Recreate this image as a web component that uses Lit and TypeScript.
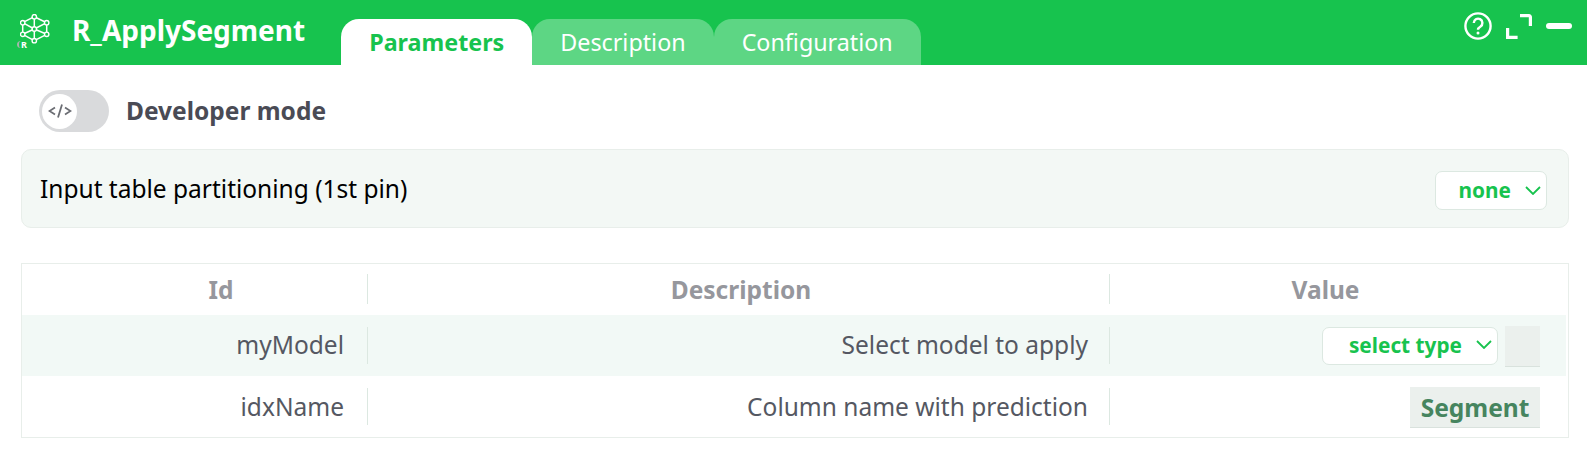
import { LitElement, html, css, svg } from 'lit';
import { customElement } from 'lit/decorators.js';

const chevron = html`<svg class="chev" viewBox="0 0 16 9" width="16" height="9"><path d="M1 1l7 7 7-7" fill="none" stroke="#17c34e" stroke-width="1.8"/></svg>`;

const logoNodes = [[14.3, 2.7], [2.7, 8.7], [26.7, 8.7], [14.3, 15], [2.7, 20.3], [26.7, 20.3], [14.3, 26.7]];
const logoEdges = [[0, 1], [0, 2], [1, 3], [2, 3], [1, 4], [2, 5], [4, 6], [5, 6], [0, 3], [3, 6], [3, 4], [3, 5]];

@customElement('app-root')
export class AppRoot extends LitElement {
  static styles = css`
    :host {
      display: block;
      font-family: 'Noto Sans', sans-serif;
      background: #fff;
      height: 461px;
      overflow: hidden;
    }
    .header {
      height: 65px;
      background: #17c34e;
      display: flex;
      align-items: flex-end;
      box-sizing: border-box;
    }
    .logo {
      position: relative;
      margin: 0 0 15px 17px;
      width: 33px;
      height: 36px;
      align-self: flex-end;
    }
    .logo svg {
      display: block;
      margin-left: 3px;
    }
    .logo .badge {
      position: absolute;
      left: 0;
      top: 27px;
      width: 8px;
      height: 7px;
      border-radius: 50%;
      border-left: 2px solid #a3b5a9;
      box-sizing: border-box;
    }
    .logo .r {
      position: absolute;
      left: 4px;
      top: 26px;
      font-size: 9px;
      font-weight: 700;
      line-height: 9px;
      color: #fff;
    }
    .title {
      margin: 0 36px 0 22px;
      align-self: flex-start;
      padding-top: 11px;
      font-size: 28px;
      line-height: 38px;
      font-weight: 700;
      color: #fff;
    }
    .tabs {
      display: flex;
      align-items: flex-end;
      height: 46px;
    }
    .tab {
      height: 46px;
      box-sizing: border-box;
      padding: 7px 28px 0;
      border-radius: 18px 18px 0 0;
      background: #5dd684;
      color: #fff;
      font-size: 23.3px;
      line-height: 32px;
    }
    .tab.active {
      background: #fff;
      color: #17c34e;
      font-weight: 700;
    }
    .actions {
      margin-left: auto;
      align-self: flex-start;
      display: flex;
      align-items: center;
      gap: 14px;
      padding: 12px 15px 0 0;
    }
    .actions svg {
      display: block;
    }
    .dev {
      display: flex;
      align-items: center;
      gap: 17px;
      margin: 25px 0 0 39px;
      height: 42px;
    }
    .switch {
      width: 70px;
      height: 42px;
      border-radius: 21px;
      background: #d9dadc;
      display: flex;
      align-items: center;
      padding-left: 3px;
      box-sizing: border-box;
    }
    .knob {
      width: 35px;
      height: 35px;
      border-radius: 50%;
      background: #fff;
      color: #6b6d73;
      display: flex;
      align-items: center;
      justify-content: center;
    }
    .dev-label {
      font-size: 24.5px;
      font-weight: 700;
      color: #4a4b55;
      margin-bottom: 2px;
    }
    .panel {
      margin: 17px 18px 0 21px;
      height: 79px;
      box-sizing: border-box;
      border: 1px solid #e8eeea;
      border-radius: 10px;
      background: #f3f8f5;
      display: flex;
      align-items: center;
      justify-content: space-between;
      padding: 0 21px 0 18px;
      font-size: 24.5px;
      color: #000;
    }
    .panel > span {
      margin-bottom: 1px;
    }
    .select {
      box-sizing: border-box;
      background: #fff;
      border: 1px solid #dce8e1;
      border-radius: 7px;
      display: flex;
      align-items: center;
      justify-content: flex-end;
      color: #17c34e;
      font-weight: 700;
      font-size: 20.8px;
      gap: 14px;
      padding-right: 5px;
    }
    .select.none {
      width: 112px;
      height: 39px;
      margin-top: 3px;
    }
    .select.type {
      width: 176px;
      height: 38px;
      padding-bottom: 2px;
    }
    .table {
      margin: 35px 18px 0 21px;
      height: 175px;
      box-sizing: border-box;
      border: 1px solid #e8eeea;
      display: grid;
      grid-template-columns: 346px 742px 1fr;
      grid-template-rows: 51px 61px 61px;
    }
    .cell {
      display: flex;
      align-items: center;
      box-sizing: border-box;
      font-size: 24.5px;
      color: #555862;
    }
    .cell.head {
      justify-content: center;
      font-weight: 700;
      color: #96979d;
    }
    .cell.head.id {
      padding-left: 52px;
    }
    .cell.head.desc {
      padding-left: 4px;
    }
    .cell.text {
      justify-content: flex-end;
      padding-right: 22px;
    }
    .cell.text.id {
      padding-right: 24px;
    }
    .cell.text > span {
      margin-bottom: 3px;
    }
    .cell.text.low > span {
      margin-bottom: 1px;
    }
    .cell.value {
      justify-content: flex-end;
      padding-right: 28px;
      gap: 7px;
    }
    .cell.head.value {
      justify-content: center;
      gap: 0;
      padding-right: 27px;
    }
    .divided {
      position: relative;
    }
    .divided::after {
      content: '';
      position: absolute;
      right: 0;
      top: 12px;
      bottom: 12px;
      width: 1px;
      background: #dce8e1;
    }
    .head.divided::after {
      top: 10px;
      bottom: 11px;
    }
    .cell.alt {
      background: #f2f9f6;
    }
    .cell.alt.last {
      margin-right: 2px;
      padding-right: 26px;
    }
    .field {
      box-sizing: border-box;
      height: 41px;
      margin-top: 2px;
      background: #ebf0ed;
      border-bottom: 1px solid #d9e2dd;
      display: flex;
      align-items: center;
      justify-content: center;
      font-size: 24.5px;
      font-weight: 700;
      color: #46855f;
    }
    .field.empty {
      width: 35px;
    }
    .field.filled {
      width: 130px;
    }
  `;

  render() {
    return html`
      <div class="header">
        <div class="logo">
          <svg viewBox="0 0 30 30" width="30" height="30" fill="none">
            ${logoEdges.map(([a, b]) => svg`<line x1=${logoNodes[a][0]} y1=${logoNodes[a][1]} x2=${logoNodes[b][0]} y2=${logoNodes[b][1]} stroke="#fff" stroke-width="1.5"/>`)}
            ${logoNodes.map(([x, y]) => svg`<circle cx=${x} cy=${y} r="2.2" fill="#17c34e" stroke="#fff" stroke-width="1.4"/>`)}
          </svg>
          <span class="badge"></span>
          <span class="r">R</span>
        </div>
        <div class="title">R_ApplySegment</div>
        <div class="tabs">
          <div class="tab active">Parameters</div>
          <div class="tab">Description</div>
          <div class="tab">Configuration</div>
        </div>
        <div class="actions">
          <svg width="28" height="28" viewBox="0 0 28 28" fill="none" stroke="#fff">
            <circle cx="14" cy="14" r="12.600" stroke-width="2.400"/>
            <path d="M9.800 11a4.300 4.300 0 1 1 6.700 3.500c-1.600 1-2.500 1.800-2.500 3.300" stroke-width="2.400"/>
            <circle cx="14" cy="21" r="1.500" fill="#fff" stroke="none"/>
          </svg>
          <svg width="26" height="25" viewBox="0 0 26 25" fill="none" stroke="#fff" stroke-width="3.200">
            <path d="M14 1.600h9a1.400 1.400 0 0 1 1.400 1.400v9"/>
            <path d="M1.600 14v9.400h10"/>
          </svg>
          <svg width="26" height="6" viewBox="0 0 26 6"><rect width="26" height="6" rx="3" fill="#fff"/></svg>
        </div>
      </div>
      <div class="dev">
        <div class="switch">
          <div class="knob">
            <svg width="24" height="16" viewBox="0 0 24 16" fill="none" stroke="currentColor" stroke-width="1.800">
              <path d="M7 4.500L1.500 8 7 11.500M17 4.500L22.500 8 17 11.500M14 1.500L10 14.500"/>
            </svg>
          </div>
        </div>
        <div class="dev-label">Developer mode</div>
      </div>
      <div class="panel">
        <span>Input table partitioning (1st pin)</span>
        <div class="select none">none ${chevron}</div>
      </div>
      <div class="table">
        <div class="cell head id divided">Id</div>
        <div class="cell head desc divided">Description</div>
        <div class="cell head value">Value</div>
        <div class="cell text id alt divided"><span>myModel</span></div>
        <div class="cell text alt divided"><span>Select model to apply</span></div>
        <div class="cell value alt last">
          <div class="select type">select type ${chevron}</div>
          <div class="field empty"></div>
        </div>
        <div class="cell text id low divided"><span>idxName</span></div>
        <div class="cell text low divided"><span>Column name with prediction</span></div>
        <div class="cell value">
          <div class="field filled">Segment</div>
        </div>
      </div>
    `;
  }
}
